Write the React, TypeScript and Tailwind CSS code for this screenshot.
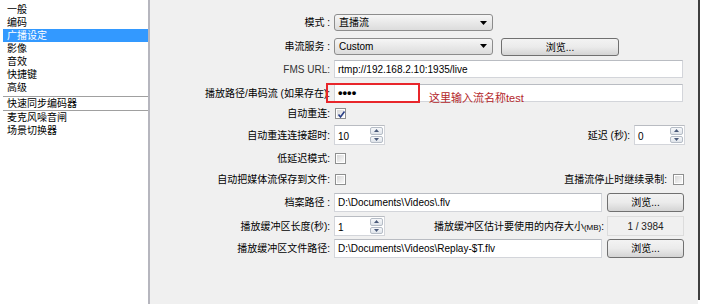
import React from "react";

const Arrow = () => (
  <svg width="7" height="4" viewBox="0 0 7 4" className="absolute right-[5px] top-1/2 -translate-y-1/2">
    <polygon points="0,0 7,0 3.5,4" fill="#000" />
  </svg>
);

function Select({ text, w }: { text: string; w: string }) {
  return (
    <div className={`relative flex h-full items-center rounded-[3px] border border-[#8c8c8c] bg-linear-to-b from-[#f6f6f6] to-[#dcdcdc] pl-[4px] ${w}`}>
      <span>{text}</span>
      <Arrow />
    </div>
  );
}

function Btn({ w }: { w: string }) {
  return (
    <div className={`flex h-full items-center justify-center rounded-[3px] border border-[#707070] bg-linear-to-b from-[#f3f3f3] via-[#ebebeb] to-[#d4d4d4] ${w}`}>
      浏览...
    </div>
  );
}

function Input({ text, w, children }: { text?: string; w: string; children?: React.ReactNode }) {
  return (
    <div className={`relative flex h-full items-center border border-[#d3d5da] border-t-[#b9bcc2] bg-white pl-[3px] ${w}`}>
      {text}
      {children}
    </div>
  );
}

function Check({ checked }: { checked?: boolean }) {
  return (
    <div className="h-[11px] w-[11px] border border-[#8e8f8f] bg-white p-[1px]">
      <div className="relative h-full w-full bg-linear-to-br from-[#d8d8d8] to-[#f8f8f8]">
        {checked && (
          <svg width="9" height="9" viewBox="0 0 9 9" className="absolute left-0 top-0">
            <path d="M1.5 4.5 L3.5 7 L7.5 1.5" stroke="#2a3f86" strokeWidth="1.6" fill="none" />
          </svg>
        )}
      </div>
    </div>
  );
}

function Spin({ value }: { value: string }) {
  return (
    <div className="flex h-full w-[51px] border border-[#d3d5da] border-t-[#b9bcc2] bg-white">
      <div className="flex-1 pl-[3px] pt-[3px]">{value}</div>
      <div className="flex w-[15px] flex-col gap-[1px] p-[1px]">
        <div className="flex flex-1 items-center justify-center rounded-[2px] border border-[#b5bcc6] bg-linear-to-b from-[#f7f8fa] to-[#dfe4ea]">
          <svg width="5" height="3" viewBox="0 0 5 3">
            <polygon points="0,3 2.5,0 5,3" fill="#4a5a7a" />
          </svg>
        </div>
        <div className="flex flex-1 items-center justify-center rounded-[2px] border border-[#b5bcc6] bg-linear-to-b from-[#f7f8fa] to-[#dfe4ea]">
          <svg width="5" height="3" viewBox="0 0 5 3">
            <polygon points="0,0 5,0 2.5,3" fill="#4a5a7a" />
          </svg>
        </div>
      </div>
    </div>
  );
}

function Label({ children }: { children: React.ReactNode }) {
  return <div className="w-[180px] shrink-0 whitespace-nowrap text-right">{children}</div>;
}

function Row({ h, mt, children }: { h: string; mt: string; children: React.ReactNode }) {
  return <div className={`flex items-center ${h} ${mt}`}>{children}</div>;
}

const items = ["一般", "编码", "广播设定", "影像", "音效", "快捷键", "高级"];

export default function App() {
  return (
    <div className="flex h-[304px] w-[702px] bg-white font-['Liberation_Sans','Noto_Sans_CJK_SC',sans-serif] text-[10px] text-black">
      <div className="w-[148px] pt-[3px]">
        {items.map((it) => (
          <div
            key={it}
            className={`ml-[3px] h-[13px] pl-[4px] leading-[13px] ${it === "广播设定" ? "bg-[#3399ff] text-white" : ""}`}
          >
            {it}
          </div>
        ))}
        <div className="ml-[3px] mt-[2px] h-[1px] bg-[#a0a0a0]" />
        <div className="ml-[3px] h-[13px] pl-[4px] leading-[13px]">快速同步编码器</div>
        <div className="ml-[3px] h-[1px] bg-[#a0a0a0]" />
        <div className="ml-[3px] h-[13px] pl-[4px] leading-[13px]">麦克风噪音闸</div>
        <div className="ml-[3px] h-[13px] pl-[4px] leading-[13px]">场景切换器</div>
      </div>
      <div className="w-[2px] bg-[#b6b6be]" />
      <div className="w-[548px] bg-[#f0f0f0] pt-[14px]">
        <Row h="h-[17px]" mt="mt-0">
          <Label>模式 :</Label>
          <div className="ml-[4px] h-full">
            <Select text="直播流" w="w-[159px]" />
          </div>
        </Row>
        <Row h="h-[18px]" mt="mt-[6px]">
          <Label>串流服务 :</Label>
          <div className="ml-[4px] flex h-full items-center gap-[8px]">
            <div className="h-[17px]">
              <Select text="Custom" w="w-[159px]" />
            </div>
            <div className="mt-[2px] h-[18px]">
              <Btn w="w-[118px]" />
            </div>
          </div>
        </Row>
        <Row h="h-[18px]" mt="mt-[5px]">
          <Label>
            <span className="text-[#333]">FMS URL:</span>
          </Label>
          <div className="ml-[4px] h-full">
            <Input text="rtmp://192.168.2.10:1935/live" w="w-[349px]" />
          </div>
        </Row>
        <Row h="h-[18px]" mt="mt-[6px]">
          <Label>播放路径/串码流 (如果存在):</Label>
          <div className="ml-[4px] h-full">
            <Input w="w-[349px]">
              <span className="text-[13px] font-bold tracking-[0px]">••••</span>
              <div className="absolute left-[-9px] top-[-2px] h-[20px] w-[94px] border-2 border-[#e8262b]" />
              <span className="absolute left-[94px] top-[5px] whitespace-nowrap text-[11px] text-[#b3262a]">这里输入流名称test</span>
            </Input>
          </div>
        </Row>
        <Row h="h-[12px]" mt="mt-[5px]">
          <Label>自动重连:</Label>
          <div className="ml-[5px]">
            <Check checked />
          </div>
        </Row>
        <Row h="h-[20px]" mt="mt-[6px]">
          <Label>自动重连连接超时:</Label>
          <div className="ml-[4px] h-full">
            <Spin value="10" />
          </div>
          <div className="flex-1 pr-[4px] text-right">延迟 (秒):</div>
          <div className="mr-[13px] h-full">
            <Spin value="0" />
          </div>
        </Row>
        <Row h="h-[12px]" mt="mt-[7px]">
          <Label>低延迟模式:</Label>
          <div className="ml-[5px]">
            <Check />
          </div>
        </Row>
        <Row h="h-[12px]" mt="mt-[9px]">
          <Label>自动把媒体流保存到文件:</Label>
          <div className="ml-[5px]">
            <Check />
          </div>
          <div className="flex-1 pr-[6px] text-right">直播流停止时继续录制:</div>
          <div className="mr-[14px]">
            <Check />
          </div>
        </Row>
        <Row h="h-[19px]" mt="mt-[8px]">
          <Label>档案路径 :</Label>
          <div className="ml-[4px] flex h-full gap-[5px]">
            <Input text="D:\Documents\Videos\.flv" w="w-[268px]" />
            <Btn w="w-[77px]" />
          </div>
        </Row>
        <Row h="h-[20px]" mt="mt-[4px]">
          <Label>播放缓冲区长度(秒):</Label>
          <div className="ml-[4px] h-full">
            <Spin value="1" />
          </div>
          <div className="flex-1 pr-[3px] text-right">
            播放缓冲区估计要使用的内存大小<span className="text-[8px]">(MB)</span>:
          </div>
          <div className="mr-[14px] flex h-full w-[77px] items-center justify-center border border-[#dcdcdc] bg-[#f0f0f0] text-[#222]">
            1 / 3984
          </div>
        </Row>
        <Row h="h-[19px]" mt="mt-[3px]">
          <Label>播放缓冲区文件路径:</Label>
          <div className="ml-[4px] flex h-full gap-[5px]">
            <Input text="D:\Documents\Videos\Replay-$T.flv" w="w-[268px]" />
            <Btn w="w-[77px]" />
          </div>
        </Row>
      </div>
      <div className="h-[300px] w-[2px] bg-[#3e3e3e]" />
      <div className="w-[2px]" />
    </div>
  );
}
